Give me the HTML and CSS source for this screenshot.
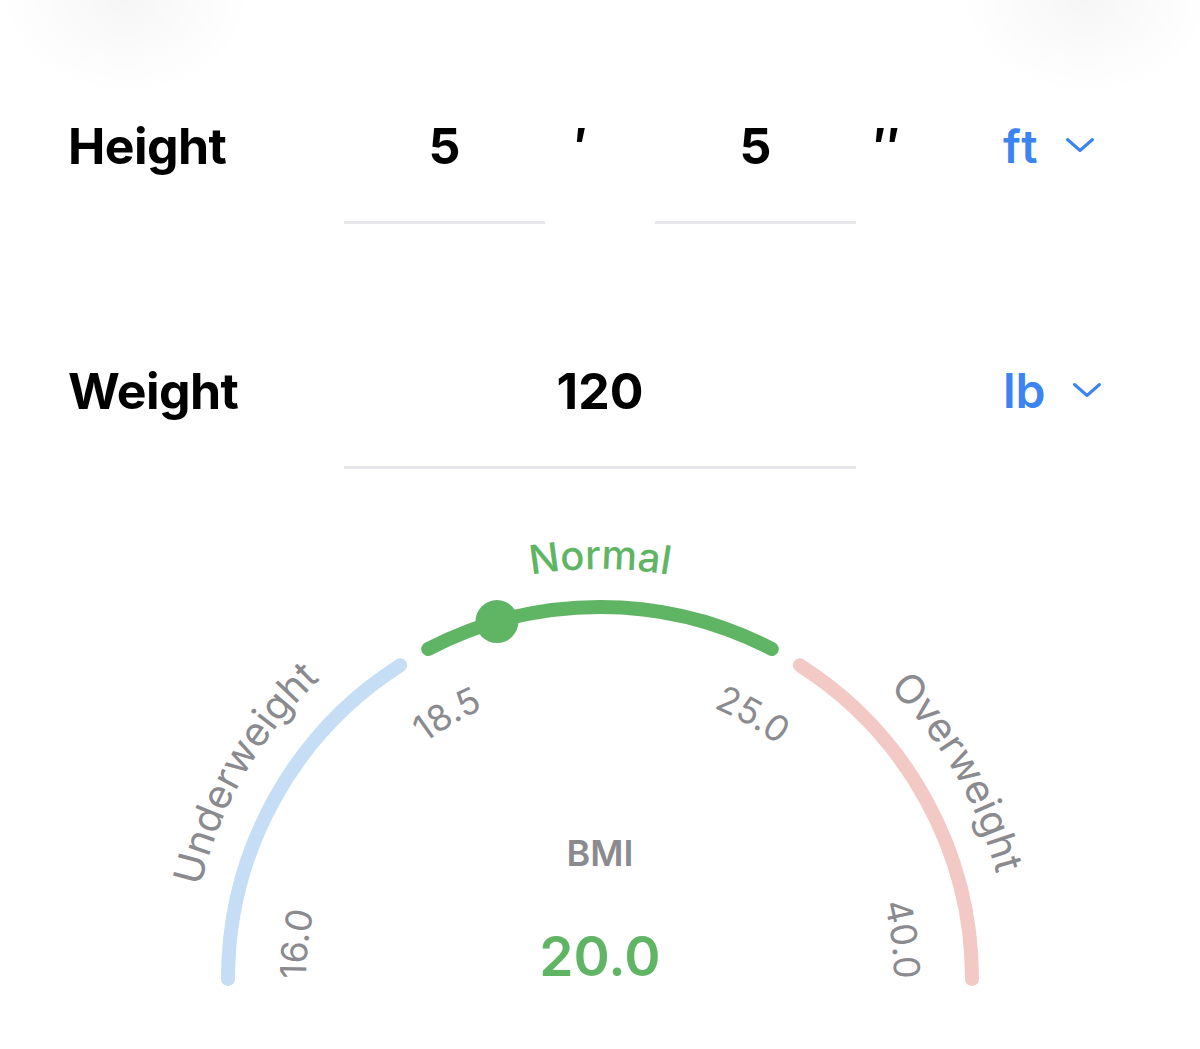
FILE: index.html
```html
<!DOCTYPE html>
<html lang="en">
<head>
<meta charset="utf-8">
<title>BMI</title>
<link rel="stylesheet" href="styles.css">
</head>
<body>
<div class="page">
  <div class="form">
    <div class="label">Height</div>
    <div class="field">5</div>
    <div class="mark mark-ft">′</div>
    <div class="field">5</div>
    <div class="mark mark-in">″</div>
    <div class="unit">
      <span class="unit-text unit-ft">ft</span>
      <svg class="chev" width="30" height="16" viewBox="0 0 30 16"><path d="M2.5 2.5 L15 13.5 L27.5 2.5"/></svg>
    </div>

    <div class="label">Weight</div>
    <div class="field field-wide">120</div>
    <div class="unit">
      <span class="unit-text unit-lb">lb</span>
      <svg class="chev" width="30" height="16" viewBox="0 0 30 16"><path d="M2.5 2.5 L15 13.5 L27.5 2.5"/></svg>
    </div>
  </div>

  <svg class="gauge" width="1200" height="520" viewBox="0 0 1200 520">
    <defs>
      <path id="labelArc" d="M 190 460 A 410 410 0 0 1 1010 460"/>
      <path id="tickArc" d="M 306 460 A 294 294 0 0 1 894 460"/>
    </defs>
    <path class="seg seg-under" d="M 228 460 A 372 372 0 0 1 400.1 146.3"/>
    <path class="seg seg-normal" d="M 428.2 130 A 372 372 0 0 1 771.8 130"/>
    <path class="seg seg-over" d="M 799.9 146.3 A 372 372 0 0 1 972 460"/>
    <circle class="knob" cx="496.9" cy="102.6" r="21.5"/>

    <text class="cat"><textPath href="#labelArc" startOffset="16.67%" text-anchor="middle">Underweight</textPath></text>
    <text class="cat cat-normal"><textPath href="#labelArc" startOffset="50%" text-anchor="middle">Normal</textPath></text>
    <text class="cat"><textPath href="#labelArc" startOffset="83.33%" text-anchor="middle">Overweight</textPath></text>

    <text class="tick"><textPath href="#tickArc" startOffset="0%" text-anchor="start">16.0</textPath></text>
    <text class="tick"><textPath href="#tickArc" startOffset="33.33%" text-anchor="middle">18.5</textPath></text>
    <text class="tick"><textPath href="#tickArc" startOffset="66.67%" text-anchor="middle">25.0</textPath></text>
    <text class="tick"><textPath href="#tickArc" startOffset="100%" text-anchor="end">40.0</textPath></text>

    <text class="bmi-label" x="600" y="346.5" text-anchor="middle">BMI</text>
    <text class="bmi-value" x="600" y="457" text-anchor="middle">20.0</text>
  </svg>
</div>
</body>
</html>
```

FILE: styles.css
```css
html, body {
  margin: 0;
  padding: 0;
  background: #ffffff;
}

body {
  font-family: Inter, "Noto Sans", "Liberation Sans", sans-serif;
  color: #000;
  width: 1200px;
  height: 1049px;
  overflow: hidden;
  background:
    radial-gradient(ellipse 125px 95px at 125px 0px, rgba(0,0,0,0.035) 0%, rgba(0,0,0,0.015) 55%, rgba(0,0,0,0) 100%),
    radial-gradient(ellipse 125px 95px at 1085px 0px, rgba(0,0,0,0.035) 0%, rgba(0,0,0,0.015) 55%, rgba(0,0,0,0) 100%),
    #ffffff;
}

.page {
  display: flex;
  flex-direction: column;
}

.form {
  display: grid;
  grid-template-columns: 274px 201px 110px 201px 147px auto;
  row-gap: 137px;
  align-items: start;
  padding: 116px 0 0 70px;
}

.form > .label {
  grid-column: 1;
  margin-left: -2px;
}

.label {
  font-size: 50px;
  font-weight: 700;
  line-height: 60px;
  letter-spacing: -0.6px;
}

.field {
  font-size: 50px;
  font-weight: 700;
  line-height: 60px;
  text-align: center;
  padding-bottom: 45px;
  border-bottom: 3px solid #e6e6eb;
}

.field-wide {
  grid-column: 2 / span 3;
}

.mark {
  font-size: 50px;
  font-weight: 700;
  line-height: 60px;
}

.mark-ft {
  padding-left: 29px;
}

.mark-in {
  padding-left: 17px;
}

.unit {
  grid-column: 6;
  display: flex;
  align-items: flex-start;
  gap: 26px;
  color: #3b84f1;
  height: 60px;
}

.unit-text {
  font-weight: 600;
  line-height: 60px;
}

.unit-ft {
  font-size: 46px;
  padding-top: 1px;
  line-height: 59px;
  letter-spacing: 2px;
}

.unit-lb {
  font-size: 48px;
}

.chev {
  margin-top: 21px;
  fill: none;
  stroke: #3b84f1;
  stroke-width: 3;
  stroke-linecap: round;
  stroke-linejoin: round;
}

.gauge {
  display: block;
  margin-top: 50px;
}

.seg {
  fill: none;
  stroke-width: 14;
  stroke-linecap: round;
}

.seg-under { stroke: #c5def6; }
.seg-normal { stroke: #60b565; }
.seg-over { stroke: #f3c9c6; }

.knob { fill: #60b565; }

.cat {
  font-family: Inter, "Liberation Sans", sans-serif;
  font-size: 40px;
  font-weight: 400;
  fill: #8a8a8f;
}

.cat-normal {
  fill: #60b565;
  font-weight: 500;
}

.tick {
  font-family: Inter, "Liberation Sans", sans-serif;
  font-size: 36px;
  font-weight: 400;
  fill: #8a8a8f;
}

.bmi-label {
  font-family: Inter, "Liberation Sans", sans-serif;
  font-size: 36px;
  font-weight: 600;
  fill: #8a8a8f;
}

.bmi-value {
  font-family: Inter, "Liberation Sans", sans-serif;
  font-size: 55px;
  font-weight: 600;
  fill: #60b565;
}
```
